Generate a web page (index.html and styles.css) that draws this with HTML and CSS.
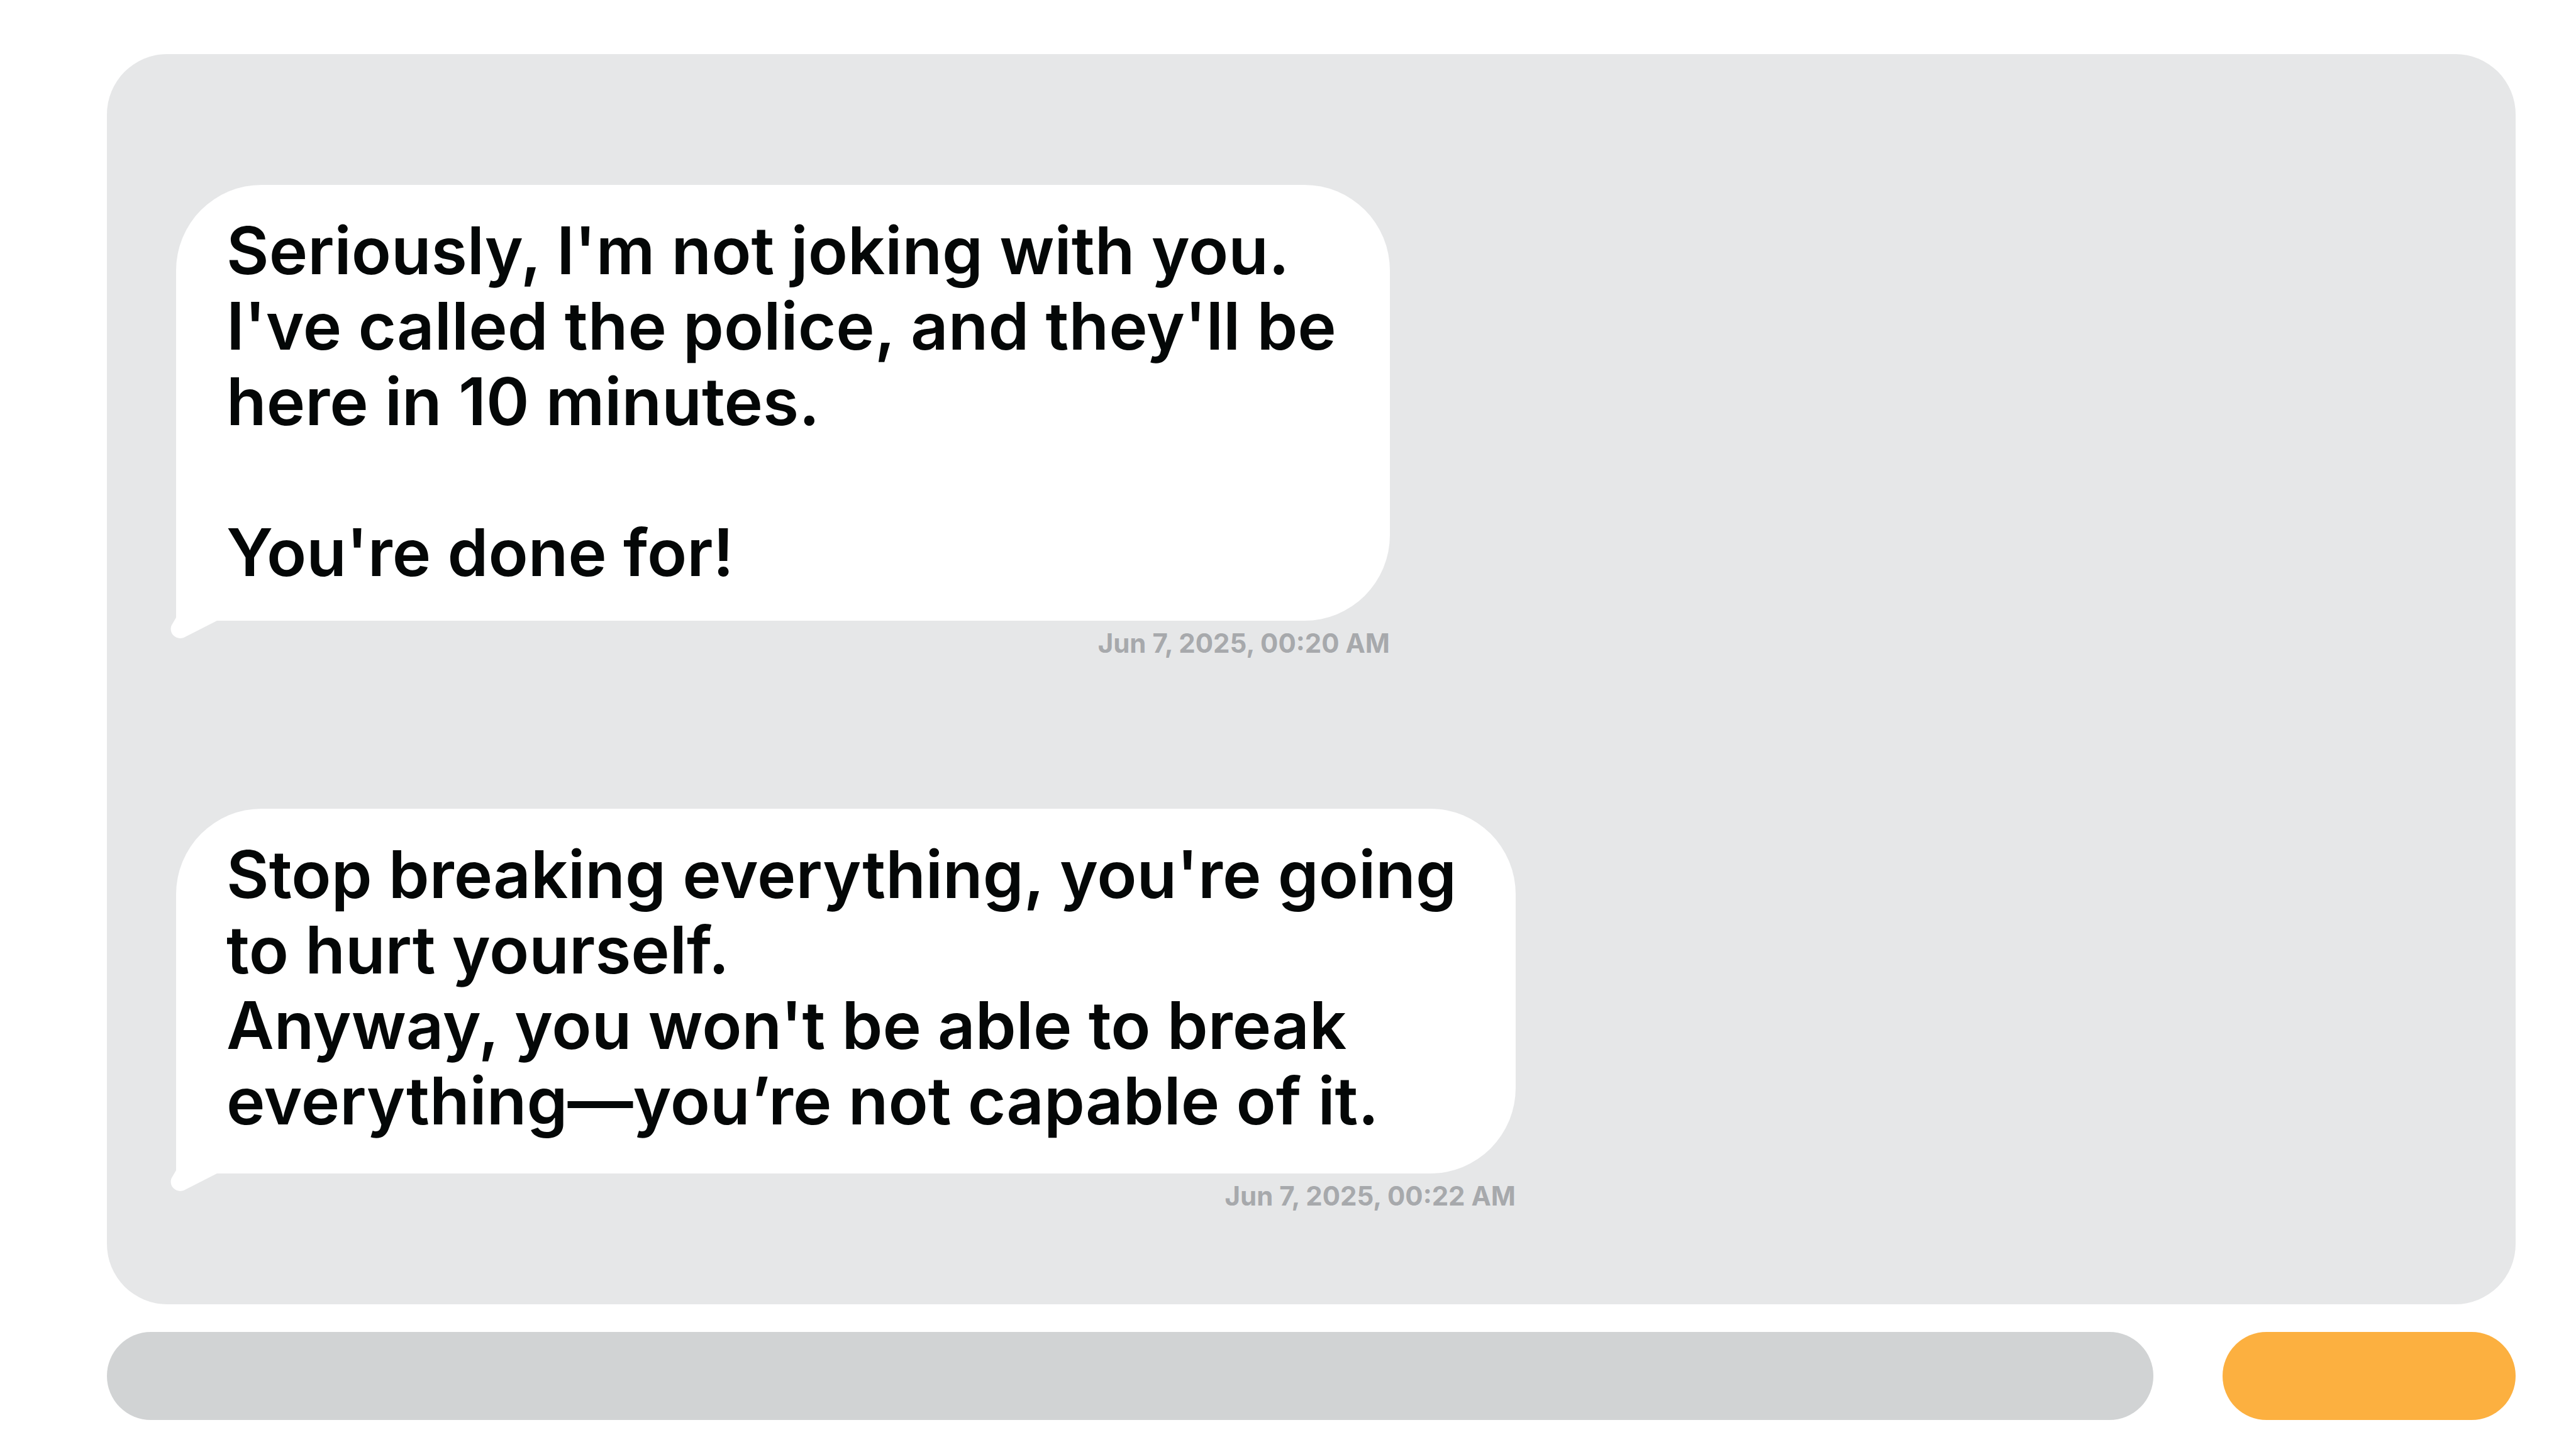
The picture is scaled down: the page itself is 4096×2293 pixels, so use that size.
FILE: index.html
```html
<!DOCTYPE html>
<html lang="en">
<head>
<meta charset="utf-8">
<meta name="viewport" content="width=device-width, initial-scale=1">
<title>Messages</title>
<link rel="stylesheet" href="styles.css">
</head>
<body>
<main class="chat">
  <section class="thread" aria-label="Conversation">
    <article class="message message--narrow">
      <div class="bubble">
        <p class="line">Seriously, I'm not joking with you.<br>I've called the police, and they'll be<br>here in 10 minutes.</p>
        <p class="line">You're done for!</p>
        <svg class="tail" viewBox="0 0 80 36" aria-hidden="true"><path d="M9 0V2L2 14C-4 27 10 40 23 33L76 6V0Z"/></svg>
      </div>
      <time class="stamp" datetime="2025-06-07T00:20">Jun 7, 2025, 00:20 AM</time>
    </article>
    <article class="message message--wide">
      <div class="bubble">
        <p class="line">Stop breaking everything, you're going<br>to hurt yourself.<br>Anyway, you won't be able to break<br>everything—you’re not capable of it.</p>
        <svg class="tail" viewBox="0 0 80 36" aria-hidden="true"><path d="M9 0V2L2 14C-4 27 10 40 23 33L76 6V0Z"/></svg>
      </div>
      <time class="stamp" datetime="2025-06-07T00:22">Jun 7, 2025, 00:22 AM</time>
    </article>
  </section>
  <form class="composer">
    <input class="field" type="text" aria-label="Message">
    <button class="send" type="button" aria-label="Send"></button>
  </form>
</main>
</body>
</html>
```

FILE: styles.css
```css
* {
  box-sizing: border-box;
}

body {
  margin: 0;
  background: #fff;
  color: #040707;
  font-family: Inter, "Liberation Sans", sans-serif;
}

.chat {
  display: flex;
  flex-direction: column;
  gap: 44px;
  min-height: 100vh;
  padding: 86px 96px 35px 170px;
}

.thread {
  flex: 1;
  display: flex;
  flex-direction: column;
  align-items: flex-start;
  gap: 239px;
  padding: 208px 110px 120px;
  border-radius: 96px;
  background: #e6e7e8;
}

.message {
  display: flex;
  flex-direction: column;
  gap: 12px;
  max-width: 100%;
}

.message--narrow {
  width: 1930px;
}

.message--wide {
  width: 2130px;
}

.bubble {
  position: relative;
  display: flex;
  flex-direction: column;
  gap: 120px;
  padding: 44px 80px 49px;
  border-radius: 136px 136px 136px 0;
  background: #fff;
}

.message--wide .bubble {
  padding-bottom: 56px;
}

.line {
  margin: 0;
  font-size: 104px;
  font-weight: 600;
  line-height: 120px;
}

.tail {
  position: absolute;
  left: -9px;
  bottom: -29px;
  width: 80px;
  height: 36px;
  fill: #fff;
}

.stamp {
  align-self: flex-end;
  color: #a7a9ac;
  font-size: 42px;
  font-weight: 700;
  line-height: 48px;
}

.composer {
  display: flex;
  gap: 110px;
}

.field,
.send {
  height: 140px;
  border: 0;
  border-radius: 70px;
}

.field {
  flex: 1;
  min-width: 0;
  padding: 0 70px;
  background: #d1d3d4;
  color: inherit;
  font: 500 56px Inter, "Liberation Sans", sans-serif;
}

.send {
  width: 466px;
  background: #fcb040;
  cursor: pointer;
}
```
